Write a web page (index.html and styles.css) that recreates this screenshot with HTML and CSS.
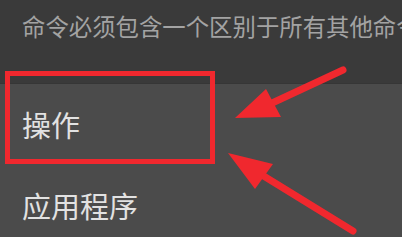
FILE: index.html
```html
<!doctype html>
<html>

<head>
  <meta charset='utf-8'>
  <title>命令</title>
  <link rel="stylesheet" href="styles.css">
</head>

<body>
  <div class='main'>
    <div class='hint'>命令必须包含一个区别于所有其他命令的名称</div>
    <div class='list'>
      <div class='item'>操作</div>
      <div class='item'>应用程序</div>
    </div>
    <svg class='mark' width='402' height='237' viewBox='0 0 402 237'>
      <rect x='7.5' y='73.5' width='205' height='88' fill='none' stroke='#f0282e' stroke-width='5' />
      <line x1='343' y1='70' x2='270' y2='104' stroke='#f0282e' stroke-width='7' stroke-linecap='round' />
      <polygon points='235,118 266,89 281,117' fill='#f0282e' />
      <line x1='353' y1='231' x2='262' y2='175' stroke='#f0282e' stroke-width='7' stroke-linecap='round' />
      <polygon points='228,153 273,164 255,189' fill='#f0282e' />
    </svg>
  </div>
</body>

</html>
```

FILE: styles.css
```css
* {
  margin: 0;
  padding: 0;
}
body {
  background: #4b4b4b;
  font-family: "Noto Sans CJK SC", "Noto Sans", sans-serif;
}
.main {
  position: relative;
  width: 402px;
  height: 237px;
  overflow: hidden;
}
.hint {
  height: 83px;
  line-height: 52px;
  padding-left: 22px;
  background: #3a3a3a;
  border-bottom: 1px solid #363636;
  color: #a3a3a3;
  font-size: 23.4px;
  white-space: nowrap;
  overflow: hidden;
}
.item {
  height: 81px;
  line-height: 81px;
  padding-left: 22px;
  color: #e2e2e2;
  font-size: 29px;
}
.mark {
  position: absolute;
  top: 0;
  left: 0;
}
```
